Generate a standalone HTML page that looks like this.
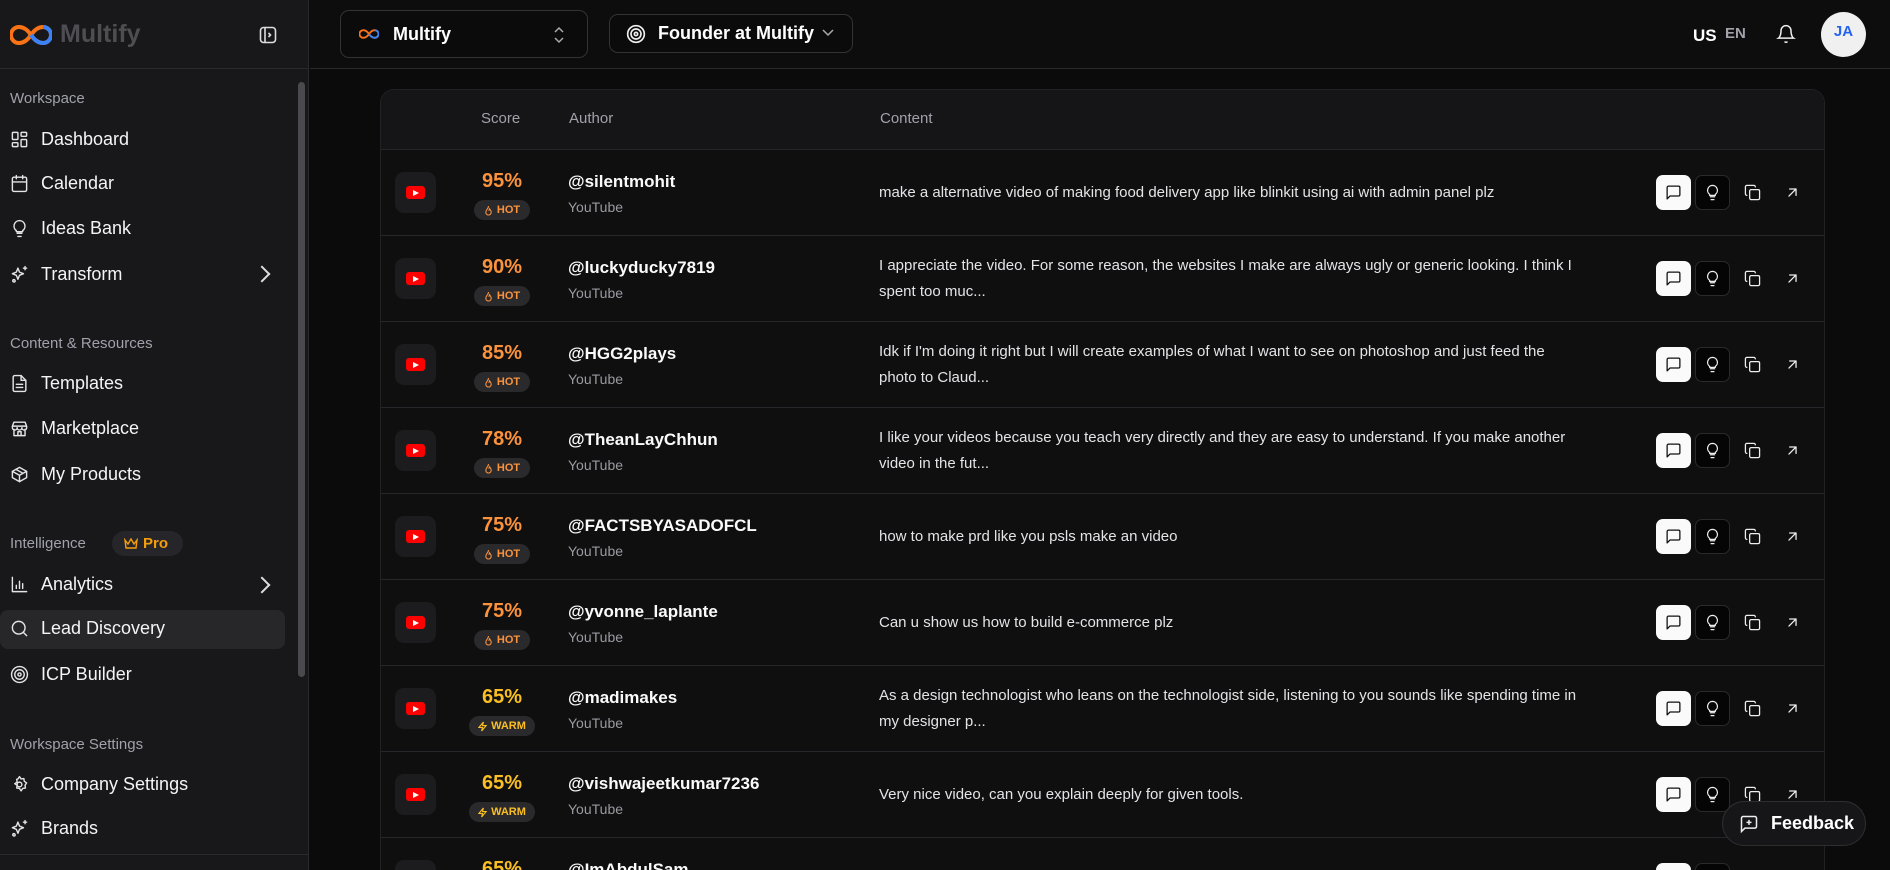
<!DOCTYPE html>
<html style="overflow:hidden;height:870px"><head><meta charset="utf-8">
<style>
*{box-sizing:border-box;margin:0;padding:0}
body{width:1890px;height:870px;overflow:hidden;background:#0b0b0c;font-family:"Liberation Sans",sans-serif;color:#fff;position:relative}
#wrap{position:absolute;left:0;top:0;width:1890px;height:870px;overflow:hidden}
.sb{position:absolute;left:0;top:0;width:309px;height:870px;background:#18181b;border-right:1px solid #2a2a2d;overflow:hidden}
.sbh{height:69px;border-bottom:1px solid #2a2a2d;position:relative}
.logo{position:absolute;left:10px;top:20px;display:flex;align-items:center;gap:8px}
.logo span{font-size:25px;font-weight:bold;color:#4e4e52}
.lbl{position:absolute;left:10px;font-size:15px;color:#a1a1aa}
.it{position:absolute;left:10px;display:flex;align-items:center;gap:12px;font-size:18px;color:#f4f4f5}
.it svg{width:19px;height:19px;fill:none;stroke:#e4e4e7;stroke-width:1.8;stroke-linecap:round;stroke-linejoin:round}
.chev{position:absolute;left:258px;width:12px;height:12px;border-right:2px solid #ddd;border-top:2px solid #ddd;transform:rotate(45deg)}
.top{position:absolute;left:310px;top:0;right:0;height:69px;border-bottom:1px solid #2a2a2d;background:#0d0d0e}
.box{position:absolute;border:1px solid #333336;border-radius:9px;background:#0b0b0c;display:flex;align-items:center;font-size:18px;font-weight:bold}
.card{position:absolute;left:380px;top:89px;width:1445px;height:781px;border:1px solid #222225;border-bottom:none;border-radius:14px 14px 0 0;background:#0f0f10;overflow:hidden}
.hd{height:60px;background:#151517;border-bottom:1px solid #26262a;position:relative;font-size:15px;color:#a1a1aa}
.hd span{position:absolute;top:20px}
.row{position:absolute;left:0;width:1443px;height:86px;border-bottom:1px solid #26262a;background:#0f0f10;overflow:hidden}
.yt{position:absolute;left:14px;top:22px;width:41px;height:41px;background:#1c1c1f;border-radius:9px}
.yt i{position:absolute;left:11px;top:14px;width:19px;height:13px;background:#ff0000;border-radius:3px}
.yt i:after{content:"";position:absolute;left:7px;top:3.5px;border-left:6px solid #fff;border-top:3px solid transparent;border-bottom:3px solid transparent}
.sc{position:absolute;left:71px;width:100px;text-align:center;top:20px;font-size:20px;font-weight:bold}
.bd{position:absolute;top:50px;height:20px;border-radius:10px;background:#2a2a2d;font-size:11px;font-weight:bold;display:flex;align-items:center;justify-content:center;gap:4px}
.au{position:absolute;left:187px;top:22px;font-size:17px;font-weight:bold;color:#fafafa}
.au small{display:block;font-size:14px;font-weight:normal;color:#9a9aa0;margin-top:7px}
.ct{position:absolute;left:498px;width:730px;font-size:15px;line-height:26px;color:#e4e4e7}
.ab{position:absolute;top:25px;width:35px;height:35px;border-radius:7px;display:flex;align-items:center;justify-content:center}
.ab svg{width:17px;height:17px;fill:none;stroke-width:1.8;stroke-linecap:round;stroke-linejoin:round}
</style></head><body><div id="wrap">
<div class="sb">
 <div class="sbh">
  <div class="logo"><svg width="42" height="24" viewBox="0 0 42 24"><path d="M21 12c-4-6-8-8-12-8a8 8 0 0 0 0 16c4 0 8-2 12-8c4-6 8-8 12-8a8 8 0 0 1 0 16c-4 0-8-2-12-8z" fill="none" stroke="#f97316" stroke-width="4"/><path d="M21 12c4 6 8 8 12 8a8 8 0 0 0 0-16" fill="none" stroke="#3b82f6" stroke-width="4"/></svg><span>Multify</span></div>
  <svg style="position:absolute;left:259px;top:26px" width="18" height="18" viewBox="0 0 18 18" fill="none" stroke="#ddd" stroke-width="1.6"><rect x="1.5" y="1.5" width="15" height="15" rx="3"/><path d="M6 2v14M9.5 7l2 2-2 2"/></svg>
 </div>
 <div style="position:absolute;left:298px;top:82px;width:7px;height:595px;background:#4a4a4e;border-radius:4px"></div>
 <div class="lbl" style="top:90px">Workspace</div>
 <div class="it" style="top:129px"><svg viewBox="0 0 24 24"><rect x="3" y="3" width="7" height="9" rx="1"/><rect x="14" y="3" width="7" height="5" rx="1"/><rect x="14" y="12" width="7" height="9" rx="1"/><rect x="3" y="16" width="7" height="5" rx="1"/></svg>Dashboard</div>
 <div class="it" style="top:173px"><svg viewBox="0 0 24 24"><rect x="3" y="4" width="18" height="18" rx="2"/><path d="M16 2v4M8 2v4M3 10h18"/></svg>Calendar</div>
 <div class="it" style="top:218px"><svg viewBox="0 0 24 24"><path d="M9 18h6M10 22h4M12 2a7 7 0 0 0-4 12.7V16h8v-1.3A7 7 0 0 0 12 2z"/></svg>Ideas Bank</div>
 <div class="it" style="top:264px"><svg viewBox="0 0 24 24"><path d="M10 4l2 5 5 2-5 2-2 5-2-5-5-2 5-2z"/><path d="M19 2v4M17 4h4"/><circle cx="5" cy="20" r="1.5"/></svg>Transform</div>
 <div class="chev" style="top:268px;left:256px"></div>
 <div class="lbl" style="top:335px">Content &amp; Resources</div>
 <div class="it" style="top:373px"><svg viewBox="0 0 24 24"><path d="M14 2H6a2 2 0 0 0-2 2v16a2 2 0 0 0 2 2h12a2 2 0 0 0 2-2V8z"/><path d="M14 2v6h6M8 13h8M8 17h8"/></svg>Templates</div>
 <div class="it" style="top:418px"><svg viewBox="0 0 24 24"><path d="M3 9l2-5h14l2 5M3 9h18v2a3 3 0 0 1-6 0 3 3 0 0 1-6 0 3 3 0 0 1-6 0zM5 13v8h14v-8M10 21v-5h4v5"/></svg>Marketplace</div>
 <div class="it" style="top:464px"><svg viewBox="0 0 24 24"><path d="M21 8l-9-5-9 5v8l9 5 9-5z"/><path d="M3 8l9 5 9-5M12 13v8M7.5 5.5l9 5"/></svg>My Products</div>
 <div class="lbl" style="top:535px">Intelligence</div>
 <div style="position:absolute;left:112px;top:531px;width:71px;height:25px;border-radius:13px;background:#26262a;color:#f59e0b;font-size:15px;font-weight:bold;display:flex;align-items:center;gap:5px;padding-left:12px"><svg width="14" height="12" viewBox="0 0 14 12" fill="none" stroke="#f59e0b" stroke-width="1.4"><path d="M1 2l3 4 3-5 3 5 3-4-1 8H2z"/></svg>Pro</div>
 <div class="it" style="top:574px"><svg viewBox="0 0 24 24"><path d="M3 3v18h18M8 17v-4M12 17V8M16 17v-6"/></svg>Analytics</div>
 <div class="chev" style="top:579px;left:256px"></div>
 <div style="position:absolute;left:0;top:610px;width:285px;height:39px;background:#27272a;border-radius:8px"></div>
 <div class="it" style="top:618px"><svg viewBox="0 0 24 24"><circle cx="11" cy="11" r="8"/><path d="M21 21l-4.3-4.3"/></svg>Lead Discovery</div>
 <div class="it" style="top:664px"><svg viewBox="0 0 24 24"><circle cx="12" cy="12" r="10"/><circle cx="12" cy="12" r="6"/><circle cx="12" cy="12" r="2"/></svg>ICP Builder</div>
 <div class="lbl" style="top:736px">Workspace Settings</div>
 <div class="it" style="top:774px"><svg viewBox="0 0 24 24"><circle cx="12" cy="12" r="3"/><path d="M12 2l2 3 3.5-.5.5 3.5 3 2-2 3 .5 3.5-3.5.5-2 3-2-3-3.5-.5.5-3.5-3-2 3-2-.5-3.5L10 5z"/></svg>Company Settings</div>
 <div class="it" style="top:818px"><svg viewBox="0 0 24 24"><path d="M10 4l2 5 5 2-5 2-2 5-2-5-5-2 5-2z"/><path d="M19 2v4M17 4h4"/><circle cx="5" cy="20" r="1.5"/></svg>Brands</div>
 <div style="position:absolute;left:0;top:854px;width:309px;border-top:1px solid #2a2a2d"></div>
</div>

<div class="top">
 <div class="box" style="left:30px;top:10px;width:248px;height:48px;padding-left:18px"><svg width="20" height="12" viewBox="0 0 42 24"><path d="M21 12c-4-6-8-8-12-8a8 8 0 0 0 0 16c4 0 8-2 12-8c4-6 8-8 12-8a8 8 0 0 1 0 16c-4 0-8-2-12-8z" fill="none" stroke="#f97316" stroke-width="4"/><path d="M21 12c4 6 8 8 12 8a8 8 0 0 0 0-16" fill="none" stroke="#3b82f6" stroke-width="4"/></svg><span style="margin-left:14px">Multify</span>
  <svg style="position:absolute;right:22px;top:15px" width="12" height="18" viewBox="0 0 12 18" fill="none" stroke="#aaa" stroke-width="1.5"><path d="M2 6l4-4 4 4M2 12l4 4 4-4"/></svg></div>
 <div class="box" style="left:299px;top:14px;width:244px;height:39px;padding-left:16px"><svg width="20" height="20" viewBox="0 0 24 24" fill="none" stroke="#eee" stroke-width="2"><circle cx="12" cy="12" r="10"/><circle cx="12" cy="12" r="6"/><circle cx="12" cy="12" r="2"/></svg><span style="margin-left:12px">Founder at Multify</span>
  <svg style="position:absolute;right:18px;top:14px" width="12" height="8" viewBox="0 0 12 8" fill="none" stroke="#aaa" stroke-width="1.5"><path d="M1 1l5 5 5-5"/></svg></div>
 <div style="position:absolute;left:1383px;top:26px;font-size:17px;font-weight:bold">US</div>
 <div style="position:absolute;left:1415px;top:25px;font-size:15px;font-weight:bold;color:#a1a1aa">EN</div>
 <svg style="position:absolute;left:1466px;top:24px" width="20" height="20" viewBox="0 0 24 24" fill="none" stroke="#eee" stroke-width="1.8"><path d="M6 8a6 6 0 0 1 12 0c0 7 3 9 3 9H3s3-2 3-9M10.3 21a1.94 1.94 0 0 0 3.4 0"/></svg>
 <div style="position:absolute;left:1511px;top:12px;width:45px;height:45px;border-radius:50%;background:#f0f0f0;color:#2563eb;font-weight:bold;font-size:15px;text-align:center;line-height:40px">JA</div>
</div>

<div class="card">
 <div class="hd"><span style="left:100px">Score</span><span style="left:188px">Author</span><span style="left:499px">Content</span></div>
 <div id="rows" style="position:absolute;left:0;top:60px;width:1443px;height:721px;overflow:hidden"></div>
</div>

<div style="position:absolute;left:1722px;top:801px;width:144px;height:45px;border-radius:23px;background:#161618;border:1px solid #2e2e31;display:flex;align-items:center;padding-left:16px;gap:12px;font-size:18px;font-weight:bold"><svg width="20" height="20" viewBox="0 0 24 24" fill="none" stroke="#eee" stroke-width="1.8"><path d="M21 15a2 2 0 0 1-2 2H7l-4 4V5a2 2 0 0 1 2-2h14a2 2 0 0 1 2 2z"/><path d="M12 7v6M9 10h6"/></svg>Feedback</div>
</div>
<script>
var d=[["95%","HOT","@silentmohit",["make a alternative video of making food delivery app like blinkit using ai with admin panel plz"]],
["90%","HOT","@luckyducky7819",["I appreciate the video. For some reason, the websites I make are always ugly or generic looking. I think I","spent too muc..."]],
["85%","HOT","@HGG2plays",["Idk if I'm doing it right but I will create examples of what I want to see on photoshop and just feed the","photo to Claud..."]],
["78%","HOT","@TheanLayChhun",["I like your videos because you teach very directly and they are easy to understand. If you make another","video in the fut..."]],
["75%","HOT","@FACTSBYASADOFCL",["how to make prd like you psls make an video"]],
["75%","HOT","@yvonne_laplante",["Can u show us how to build e-commerce plz"]],
["65%","WARM","@madimakes",["As a design technologist who leans on the technologist side, listening to you sounds like spending time in","my designer p..."]],
["65%","WARM","@vishwajeetkumar7236",["Very nice video, can you explain deeply for given tools."]],
["65%","WARM","@ImAbdulSam",[""]]];
var h="";
d.forEach(function(r,i){
 var hot=r[1]=="HOT",col=hot?"#fb923c":"#fbbf24";
 var bw=hot?56:66,bl=121-bw/2;
 var ic=hot?'<svg width="9" height="11" viewBox="0 0 10 12" fill="none" stroke="'+col+'" stroke-width="1.2"><path d="M5 1c0 3-3 4-3 7a3 3 0 0 0 6 0c0-2-1-3-2-4 0 2-1 2-1 2"/></svg>':'<svg width="9" height="11" viewBox="0 0 10 12" fill="none" stroke="'+col+'" stroke-width="1.2"><path d="M6 1L1 7h4l-1 4 5-6H5z"/></svg>';
 var top=r[3].length>1?17:30;
 var hh=i==8?33:86;
 h+='<div class="row" style="top:'+(i*86)+'px;height:'+hh+'px"><div class="yt"><i></i></div>'+
 '<div class="sc" style="color:'+col+'">'+r[0]+'</div><div class="bd" style="left:'+bl+'px;width:'+bw+'px;color:'+col+'">'+ic+r[1]+'</div>'+
 '<div class="au">'+r[2]+'<small>YouTube</small></div><div class="ct" style="top:'+top+'px">'+r[3].join('<br>')+'</div>'+
 '<div class="ab" style="left:1275px;background:#fafafa"><svg viewBox="0 0 24 24" stroke="#111"><path d="M21 15a2 2 0 0 1-2 2H7l-4 4V5a2 2 0 0 1 2-2h14a2 2 0 0 1 2 2z"/></svg></div>'+
 '<div class="ab" style="left:1314px;background:#050505;border:1px solid #2a2a2d"><svg viewBox="0 0 24 24" stroke="#eee"><path d="M9 18h6M10 22h4M12 2a7 7 0 0 0-4 12.7V16h8v-1.3A7 7 0 0 0 12 2z"/></svg></div>'+
 '<div class="ab" style="left:1354px"><svg viewBox="0 0 24 24" stroke="#eee"><rect x="8" y="8" width="14" height="14" rx="2"/><path d="M4 16c-1 0-2-1-2-2V4c0-1 1-2 2-2h10c1 0 2 1 2 2"/></svg></div>'+
 '<div class="ab" style="left:1394px"><svg viewBox="0 0 24 24" stroke="#eee"><path d="M7 17L17 7M8 7h9v9"/></svg></div></div>';
});
document.getElementById("rows").innerHTML=h;
</script>
</body></html>
